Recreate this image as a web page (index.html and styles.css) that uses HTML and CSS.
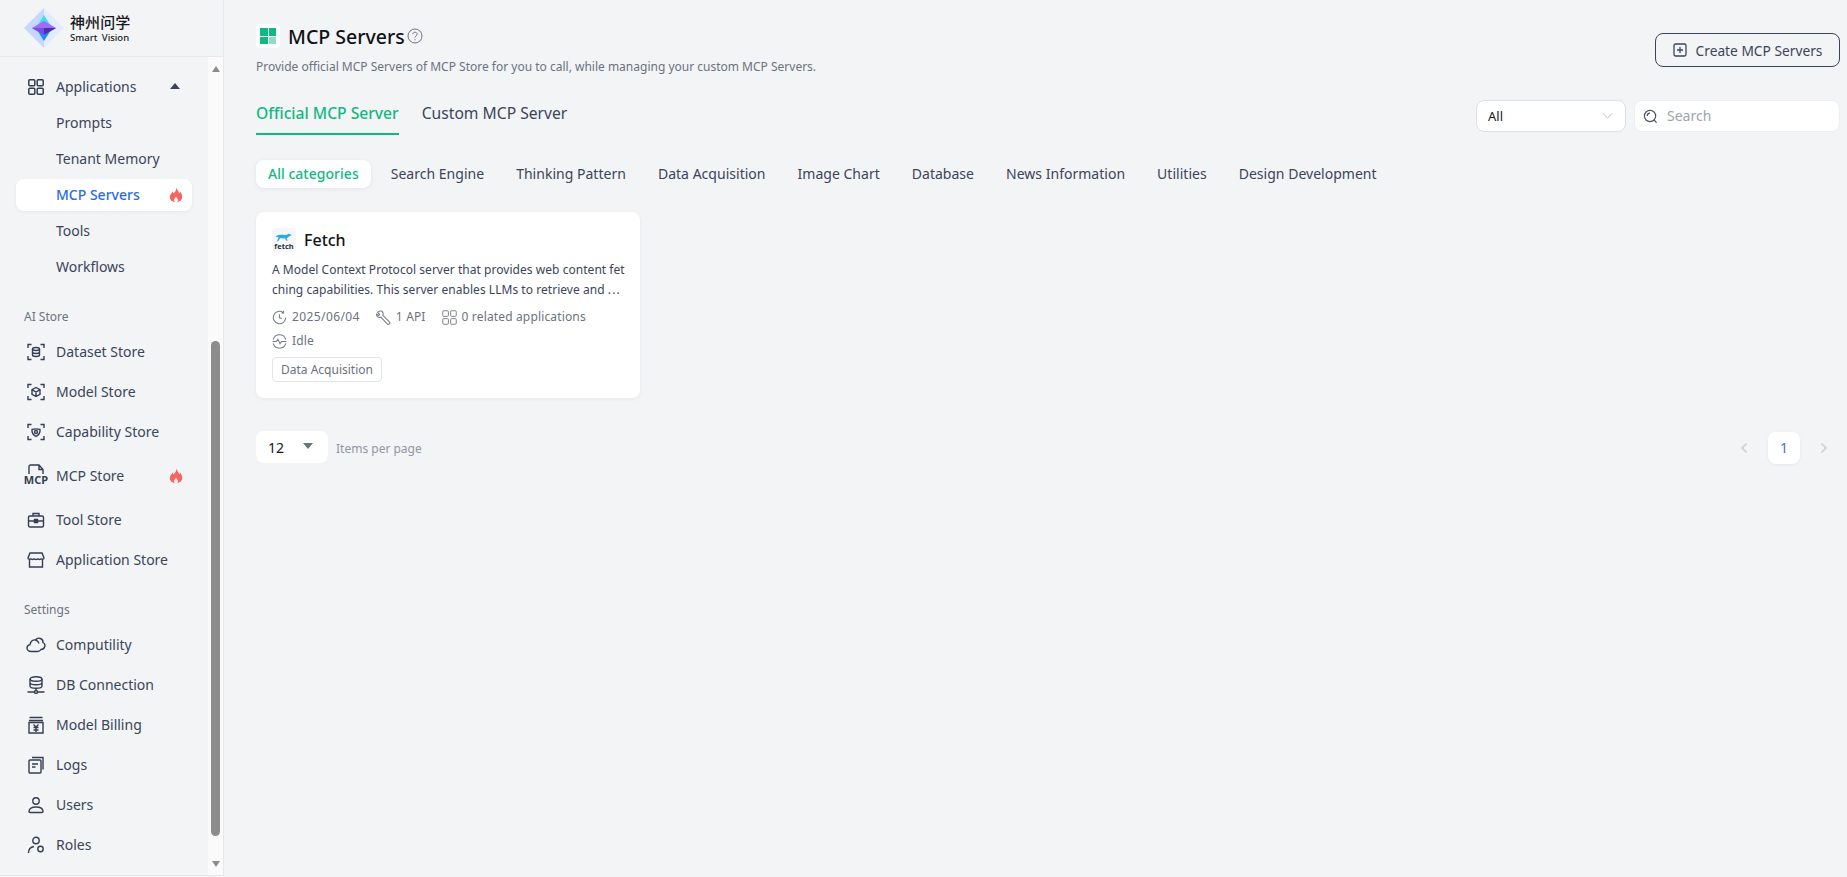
FILE: index.html
```html
<!DOCTYPE html>
<html lang="en">
<head>
    <meta charset="UTF-8">
    <title>MCP Servers</title>
    <link rel="stylesheet" href="styles.css">
</head>
<body>
    <svg class="defs" width="0" height="0">
        <symbol id="flame" viewBox="0 0 16 16">
            <path fill="#f76560" fill-rule="evenodd" d="M8.500 .5C9 3 11 4.500 11.200 6.500 11.800 6 12 5.200 12 4.500 13.500 6 14.200 8 14.200 10 14.200 13 11.500 15.200 8 15.200S1.800 13 1.800 10C1.800 7.500 4 6.500 4.500 4.500 5 5 5.300 5.800 5.300 6.500 7 5.500 8.500 3 8.500 .5zM8 9.500C8.300 11 10 11.800 10 13.200 10 14.300 9 15.200 8 15.200S6 14.300 6 13.200C6 11.800 7.700 11 8 9.500z"/>
        </symbol>
        <symbol id="grid" viewBox="0 0 16 16">
            <rect x=".8" y=".8" width="6" height="6" rx="1"/>
            <rect x="9.200" y=".8" width="6" height="6" rx="1"/>
            <rect x=".8" y="9.200" width="6" height="6" rx="1"/>
            <rect x="9.200" y="9.200" width="6" height="6" rx="1"/>
        </symbol>
        <symbol id="corners" viewBox="0 0 18 18">
            <path d="M1 5V1.500h3.500M13.500 1.500H17V5M17 13v3.500h-3.500M4.500 16.500H1V13"/>
        </symbol>
    </svg>

    <div class="app">
        <aside class="sidebar">
            <div class="brand">
                <svg class="brand-mark" viewBox="0 0 40 40">
                    <path fill="#e2ecff" d="M20 0l20 20-20 20z"/>
                    <path fill="#c3d7ff" d="M20 0v40L0 20z"/>
                    <path fill="#3fdcf8" d="M20 7l7 11H13z"/>
                    <path fill="#1a8ff0" d="M13 22h14l-7 11z"/>
                    <path fill="#a06cf5" d="M20 13l12 7-12 7-12-7z"/>
                    <path fill="#4a2fb0" d="M20 20h12l-12 7z"/>
                    <path fill="#7a4be8" d="M20 20H8l12 7z"/>
                </svg>
                <div class="brand-text">
                    <div class="brand-cn">神州问学</div>
                    <div class="brand-en">Smart Vision</div>
                </div>
            </div>
            <div class="side-body">
                <nav class="nav">
                    <div class="nav-item row-app">
                        <svg class="nav-icon grid-icon"><use href="#grid"/></svg>
                        <span class="nav-label">Applications</span>
                        <span class="caret-up"></span>
                    </div>
                    <div class="nav-item row-app">Prompts</div>
                    <div class="nav-item row-app">Tenant Memory</div>
                    <div class="nav-item row-app active">
                        <span class="nav-label">MCP Servers</span>
                        <svg class="flame"><use href="#flame"/></svg>
                    </div>
                    <div class="nav-item row-app">Tools</div>
                    <div class="nav-item row-app">Workflows</div>

                    <div class="nav-title first">AI Store</div>
                    <div class="nav-item">
                        <svg class="nav-icon" viewBox="0 0 18 18"><use href="#corners"/><ellipse cx="9" cy="6" rx="3.500" ry="1.500"/><path d="M5.500 6v6c0 .8 1.600 1.500 3.500 1.500s3.500-.7 3.500-1.500V6M5.500 9c0 .8 1.600 1.500 3.500 1.500s3.500-.7 3.500-1.500"/></svg>
                        <span class="nav-label">Dataset Store</span>
                    </div>
                    <div class="nav-item">
                        <svg class="nav-icon" viewBox="0 0 18 18"><use href="#corners"/><path d="M9 4.500l4 2.200v4.600l-4 2.200-4-2.200V6.700zM5 6.700l4 2.300 4-2.300M9 9v4.500"/></svg>
                        <span class="nav-label">Model Store</span>
                    </div>
                    <div class="nav-item">
                        <svg class="nav-icon" viewBox="0 0 18 18"><use href="#corners"/><path d="M5 6.500c2.500-.8 5.500-.8 8 0 .3 3-1.200 5.500-4 7-2.800-1.500-4.300-4-4-7z"/><circle cx="9" cy="9" r="1.500"/></svg>
                        <span class="nav-label">Capability Store</span>
                    </div>
                    <div class="nav-item row-mcp">
                        <div class="mcp-icon">
                            <svg viewBox="0 0 20 10"><path d="M3 10V2.500C3 1.600 3.600 1 4.500 1H13l4 4.500V10M13 1v4.500h4"/></svg>
                            <span>MCP</span>
                        </div>
                        <span class="nav-label">MCP Store</span>
                        <svg class="flame"><use href="#flame"/></svg>
                    </div>
                    <div class="nav-item row-tool">
                        <svg class="nav-icon" viewBox="0 0 18 18"><rect x="1.500" y="5" width="15" height="11" rx="1.500"/><path d="M6 5V2.500h6V5M1.500 10h15M7.500 8.500h3v3h-3z"/></svg>
                        <span class="nav-label">Tool Store</span>
                    </div>
                    <div class="nav-item">
                        <svg class="nav-icon" viewBox="0 0 18 18"><path d="M3 2h12l2 5c0 1.500-2.400 1.800-2.700.4-.4 1.400-3 1.400-3.300 0-.3 1.400-3.700 1.400-4 0-.3 1.400-2.900 1.400-3.300 0C3.400 8.800 1 8.500 1 7zM2.500 8.500V16h13V8.500"/></svg>
                        <span class="nav-label">Application Store</span>
                    </div>

                    <div class="nav-title">Settings</div>
                    <div class="nav-item">
                        <svg class="nav-icon cloud" viewBox="0 0 20 18"><path d="M5 15.500c-2.200 0-4-1.500-4-3.500 0-1.800 1.300-3.100 3-3.400C4.600 5 7 3.500 9.500 4c1-1.500 3-2.300 5-1.500 1.800.7 2.600 2.300 2.500 4 1.500.8 2.200 2.400 1.800 4-.5 1.900-2 3-3.800 3-.8 1.300-2 2-3.500 2z"/><path d="M9.500 4c1.800.5 3 1.700 3.500 3.500"/></svg>
                        <span class="nav-label">Computility</span>
                    </div>
                    <div class="nav-item">
                        <svg class="nav-icon" viewBox="0 0 18 18"><ellipse cx="9" cy="3" rx="6" ry="2.300"/><path d="M3 3v7c0 1.300 2.700 2.300 6 2.300s6-1 6-2.300V3M3 6.500c0 1.300 2.700 2.300 6 2.300s6-1 6-2.300M9 12.300V15M0.500 16h6.500M11 16h6.500"/><circle cx="9" cy="16" r="1.500"/></svg>
                        <span class="nav-label">DB Connection</span>
                    </div>
                    <div class="nav-item">
                        <svg class="nav-icon" viewBox="0 0 18 18"><path d="M2.500 1.500h13M2 4.500h14M2 6.500h14V17H2zM6.500 8.500L9 11l2.500-2.500M6.500 11.500h5M6.500 14h5M9 11v5"/></svg>
                        <span class="nav-label">Model Billing</span>
                    </div>
                    <div class="nav-item">
                        <svg class="nav-icon" viewBox="0 0 18 18"><rect x="2" y="4" width="12" height="13" rx="1"/><path d="M5 1.500h11v12M5 8h6M5 11h3.500"/></svg>
                        <span class="nav-label">Logs</span>
                    </div>
                    <div class="nav-item">
                        <svg class="nav-icon" viewBox="0 0 18 18"><circle cx="9" cy="5" r="3.200"/><path d="M2 15.500c0-3 3-4.500 7-4.500s7 1.500 7 4.500c0 .7-.5 1-1 1H3c-.5 0-1-.3-1-1z"/></svg>
                        <span class="nav-label">Users</span>
                    </div>
                    <div class="nav-item">
                        <svg class="nav-icon" viewBox="0 0 18 18"><circle cx="9" cy="4.500" r="3.200"/><path d="M1.500 17c0-3.500 2.200-6 5.500-6.500"/><circle cx="13.500" cy="13" r="2.700"/></svg>
                        <span class="nav-label">Roles</span>
                    </div>
                </nav>
                <div class="scrollbar">
                    <span class="sb-arrow up"></span>
                    <div class="sb-thumb"></div>
                    <span class="sb-arrow down"></span>
                </div>
            </div>
        </aside>

        <main class="main">
            <div class="head">
                <div>
                    <div class="title-row">
                        <div class="title-icon">
                            <i></i><i></i><i></i><i class="pale"></i>
                        </div>
                        <h1 class="title">MCP Servers</h1>
                        <svg class="help" viewBox="0 0 16 16"><circle cx="8" cy="8" r="7"/><path d="M5.800 6.200C5.800 5 6.800 4.200 8 4.200s2.200.8 2.200 2c0 1.600-2.200 1.700-2.200 3.300"/><circle class="dot" cx="8" cy="11.700" r=".6"/></svg>
                    </div>
                    <p class="subtitle">Provide official MCP Servers of MCP Store for you to call, while managing your custom MCP Servers.</p>
                </div>
                <button class="btn-create">
                    <svg viewBox="0 0 14 14"><rect x="1" y="1" width="12" height="12" rx="1.500"/><path d="M7 4v6M4 7h6"/></svg>
                    Create MCP Servers
                </button>
            </div>

            <div class="tabs-row">
                <div class="tabs">
                    <div class="tab active">Official MCP Server</div>
                    <div class="tab">Custom MCP Server</div>
                </div>
                <div class="filters">
                    <div class="select-all">
                        <span>All</span>
                        <svg viewBox="0 0 12 8"><path d="M1 1l5 5.500L11 1"/></svg>
                    </div>
                    <div class="search">
                        <svg viewBox="0 0 16 16"><circle cx="7.500" cy="7.500" r="6"/><path d="M4.500 7.500c0-1.700 1.300-3 3-3M12 12l2.500 2.500"/></svg>
                        <span>Search</span>
                    </div>
                </div>
            </div>

            <div class="cats">
                <div class="cat active">All categories</div>
                <div class="cat">Search Engine</div>
                <div class="cat">Thinking Pattern</div>
                <div class="cat">Data Acquisition</div>
                <div class="cat">Image Chart</div>
                <div class="cat">Database</div>
                <div class="cat">News Information</div>
                <div class="cat">Utilities</div>
                <div class="cat">Design Development</div>
            </div>

            <div class="card">
                <div class="card-head">
                    <div class="fetch-logo">
                        <svg viewBox="0 0 24 12"><path fill="#29abe2" d="M2 5c3-1.500 6-2 10-1.500 2 .2 4-.3 5.500-1.500l2 .6 2 1.200-2.500.6c-1 1.500-2.500 2.500-4 3l1.500 3h-1.500L13 7.500c-2 .3-4 .2-5.500-.2L5 11H3.500l2-4.500C4.500 6.200 3 6 2 5z"/></svg>
                        <span>fetch</span>
                    </div>
                    <div class="card-name">Fetch</div>
                </div>
                <div class="card-desc">A Model Context Protocol server that provides web content fet<br>ching capabilities. This server enables LLMs to retrieve and <span class="dots">...</span></div>
                <div class="meta">
                    <span class="meta-item date">
                        <svg viewBox="0 0 14 14"><path d="M12.800 7A5.800 5.800 0 1 1 10.500 2.400M10.800 .8v2h-2M7 4v3.200l2.200 1"/></svg>
                        2025/06/04
                    </span>
                    <span class="meta-item">
                        <svg viewBox="0 0 14 14"><path d="M5 1c-1.300-.3-2.800.2-3.500 1.200l2 2-1 1-2-1.500C.2 4 .6 5.400 1.500 6.200c.8.700 2 .9 3 .5l6 6.300c.6.500 1.400.5 2 0s.6-1.400 0-2L6.500 5c.4-1.500-.2-3.400-1.500-4z"/></svg>
                        1 API
                    </span>
                    <span class="meta-item">
                        <svg viewBox="0 0 16 16"><use href="#grid"/></svg>
                        0 related applications
                    </span>
                </div>
                <div class="meta">
                    <span class="meta-item">
                        <svg viewBox="0 0 14 14"><path d="M1.200 5.200A6 6 0 0 1 12.800 5.200M12.800 8.800A6 6 0 0 1 1.200 8.800M.5 7H4l1.500-2 2 4L9 7h4.500"/></svg>
                        Idle
                    </span>
                </div>
                <div class="tag">Data Acquisition</div>
            </div>

            <div class="foot">
                <div class="per-page">
                    <div class="size-select">
                        <span>12</span>
                        <i class="caret-down"></i>
                    </div>
                    <span class="per-label">Items per page</span>
                </div>
                <div class="pager">
                    <svg viewBox="0 0 8 12"><path d="M6.500 1.500L2 6l4.500 4.500"/></svg>
                    <div class="page-num">1</div>
                    <svg viewBox="0 0 8 12"><path d="M1.500 1.500L6 6l-4.500 4.500"/></svg>
                </div>
            </div>
        </main>
    </div>
</body>
</html>
```

FILE: styles.css
```css
*{
    box-sizing: border-box;
}
html,body{
    height: 100%;
}
body{
    margin: 0;
    background-color: #f3f4f6;
    color: #3a4559;
    font-family: "Noto Sans", "Noto Sans CJK SC", sans-serif;
    font-size: 14px;
    overflow: hidden;
}
.defs{
    position: absolute;
}
.app{
    display: flex;
    height: 877px;
}

/* sidebar */
.sidebar{
    width: 224px;
    height: 876px;
    flex-shrink: 0;
    border-right: 1px solid #e6e8ec;
    border-bottom: 1px solid #e6e8ec;
    display: flex;
    flex-direction: column;
}
.brand{
    height: 57px;
    flex-shrink: 0;
    border-bottom: 1px solid #e6e8ec;
    display: flex;
    align-items: center;
    padding-left: 24px;
    gap: 6px;
}
.brand-mark{
    width: 40px;
    height: 40px;
}
.brand-text{
    color: #17191f;
}
.brand-cn{
    font-size: 15px;
    line-height: 19px;
    font-weight: 500;
    letter-spacing: .1px;
}
.brand-en{
    font-size: 9.500px;
    line-height: 11px;
    font-weight: 500;
    word-spacing: 2px;
}
.side-body{
    flex: 1;
    display: flex;
    min-height: 0;
}
.nav{
    width: 208px;
    padding-top: 12px;
}
.nav-item{
    height: 40px;
    margin: 0 16px;
    padding-left: 40px;
    display: flex;
    align-items: center;
    position: relative;
    border-radius: 8px;
    line-height: 20px;
}
.nav-item.row-app{
    height: 36px;
}
.nav-item.row-mcp{
    margin-top: 4px;
}
.nav-item.row-tool{
    margin-top: 4px;
}
.nav-item.active{
    background-color: #fff;
    color: #2a6ae9;
    font-weight: 500;
    height: 32px;
    margin-top: 2px;
    margin-bottom: 2px;
    box-shadow: 0 1px 3px rgba(30,40,60,.06);
}
.nav-label{
    flex: 1;
}
.nav-icon{
    position: absolute;
    left: 11px;
    width: 18px;
    height: 18px;
    fill: none;
    stroke: #333e52;
    stroke-width: 1.400;
}
.nav-icon.grid-icon{
    left: 12px;
    width: 16px;
    height: 16px;
    stroke-width: 1.500;
}
.nav-icon.cloud{
    left: 10px;
    width: 20px;
}
.flame{
    width: 16px;
    height: 16px;
    margin-right: 8px;
}
.caret-up{
    width: 0;
    height: 0;
    margin-right: 12px;
    margin-bottom: 3px;
    border-left: 5px solid transparent;
    border-right: 5px solid transparent;
    border-bottom: 6px solid #3a4559;
}
.nav-title{
    margin: 20px 0 3px 24px;
    height: 24px;
    line-height: 24px;
    font-size: 12px;
    color: #6b7280;
}
.nav-title:not(.first){
    margin-top: 18px;
}
.mcp-icon{
    position: absolute;
    left: 8px;
    top: 8px;
    width: 24px;
    display: flex;
    flex-direction: column;
    align-items: center;
}
.mcp-icon svg{
    width: 20px;
    height: 10px;
    fill: none;
    stroke: #333e52;
    stroke-width: 1.400;
}
.mcp-icon span{
    font-size: 11px;
    line-height: 11px;
    font-weight: 700;
    color: #333e52;
}

/* scrollbar */
.scrollbar{
    width: 15px;
    background-color: #fafafa;
    display: flex;
    flex-direction: column;
    align-items: center;
}
.sb-thumb{
    width: 9px;
    height: 495px;
    margin-top: 269px;
    border-radius: 5px;
    background-color: #8c8c8c;
}
.sb-arrow{
    width: 0;
    height: 0;
    border-left: 4.500px solid transparent;
    border-right: 4.500px solid transparent;
}
.sb-arrow.up{
    margin-top: 9px;
    border-bottom: 6px solid #8c8c8c;
}
.sb-arrow.down{
    margin-top: 25px;
    border-top: 6px solid #8c8c8c;
}

/* main */
.main{
    flex: 1;
    min-width: 0;
    padding: 0 7px 0 32px;
}
.head{
    height: 96px;
    display: flex;
    justify-content: space-between;
}
.title-row{
    margin-top: 24px;
    height: 24px;
    display: flex;
    align-items: center;
}
.title-icon{
    width: 24px;
    height: 24px;
    padding: 4px;
    background-color: #fff;
    border-radius: 4px;
    display: grid;
    grid-template-columns: 1fr 1fr;
    gap: 1px;
    margin-right: 8px;
}
.title-icon i{
    background-color: #10b981;
}
.title-icon i.pale{
    background-color: #8fdcc0;
}
.title{
    margin: 1px 0 0;
    font-size: 19.500px;
    line-height: 24px;
    font-weight: 500;
    color: #0f1218;
}
.help{
    width: 16px;
    height: 16px;
    margin-left: 2px;
    fill: none;
    stroke: #6b7280;
}
.help .dot{
    fill: #6b7280;
    stroke: none;
}
.subtitle{
    margin: 10px 0 0;
    font-size: 12px;
    line-height: 18px;
    color: #6b7280;
}
.btn-create{
    margin-top: 33px;
    width: 185px;
    height: 34px;
    padding-left: 6px;
    border: 1px solid #3a4559;
    border-radius: 8px;
    background-color: transparent;
    color: #3a4559;
    font: inherit;
    font-size: 13.750px;
    display: flex;
    align-items: center;
    justify-content: center;
    gap: 9px;
}
.btn-create svg{
    width: 14px;
    height: 14px;
    fill: none;
    stroke: #3a4559;
    stroke-width: 1.300;
}
.tabs-row{
    display: flex;
    justify-content: space-between;
}
.tabs{
    display: flex;
    gap: 23px;
}
.tab{
    height: 39px;
    font-size: 15.650px;
    line-height: 35px;
}
.tab.active{
    color: #10b981;
    font-weight: 500;
    border-bottom: 2px solid #10b981;
}
.filters{
    display: flex;
    gap: 8px;
    margin-top: 4px;
}
.select-all{
    width: 150px;
    height: 32px;
    padding: 0 11px;
    background-color: #fff;
    border: 1px solid #dcdfe4;
    border-radius: 8px;
    display: flex;
    align-items: center;
    justify-content: space-between;
    color: #15181e;
    font-size: 13px;
}
.select-all svg{
    width: 11px;
    height: 8px;
    margin-right: 1px;
    fill: none;
    stroke: #b6bbc4;
}
.search{
    width: 206px;
    height: 32px;
    padding: 0 8px 2px;
    background-color: #fff;
    border: 1px solid #eceef1;
    border-radius: 8px;
    display: flex;
    align-items: center;
    gap: 9px;
    color: #9ca3af;
}
.search svg{
    width: 15px;
    height: 15px;
    margin-top: 2px;
    fill: none;
    stroke: #4b5563;
    stroke-width: 1.300;
}
.cats{
    margin-top: 25px;
    display: flex;
    gap: 8px;
    letter-spacing: .02px;
}
.cat{
    height: 28px;
    padding: 0 12px;
    line-height: 28px;
    border-radius: 8px;
}
.cat.active{
    background-color: #fff;
    color: #10b981;
    font-weight: 500;
    box-shadow: 0 1px 4px rgba(30,40,60,.08);
}

/* card */
.card{
    width: 384px;
    height: 186px;
    margin-top: 24px;
    padding: 16px;
    background-color: #fff;
    border-radius: 8px;
    box-shadow: 0 1px 4px rgba(30,40,60,.06);
}
.card-head{
    display: flex;
    align-items: center;
    gap: 8px;
    height: 24px;
}
.fetch-logo{
    width: 24px;
    height: 24px;
    border-radius: 4px;
    background-color: #f5f6f7;
    display: flex;
    flex-direction: column;
    align-items: center;
    padding-top: 4px;
}
.fetch-logo svg{
    width: 20px;
    height: 10px;
}
.fetch-logo span{
    font-size: 7.500px;
    line-height: 8px;
    font-weight: 700;
    color: #2b3440;
}
.card-name{
    font-size: 16px;
    font-weight: 500;
    color: #0f1218;
}
.card-desc{
    margin-top: 8px;
    font-size: 12px;
    line-height: 20px;
    white-space: nowrap;
    letter-spacing: .04px;
}
.dots{
    letter-spacing: 1.200px;
}
.meta{
    display: flex;
    gap: 16px;
    font-size: 12px;
    line-height: 24px;
    letter-spacing: .15px;
    color: #6b7280;
}
.card-desc + .meta{
    margin-top: 5px;
}
.meta-item{
    display: flex;
    align-items: center;
    gap: 5px;
}
.meta-item.date{
    letter-spacing: .4px;
}
.meta-item svg{
    width: 15px;
    height: 15px;
    fill: none;
    stroke: #757c89;
}
.tag{
    display: inline-block;
    height: 25px;
    margin-top: 4px;
    padding: 0 8px;
    line-height: 23px;
    font-size: 12px;
    color: #6b7280;
    border: 1px solid #e3e5e9;
    border-radius: 4px;
}

/* footer */
.foot{
    margin-top: 32px;
    display: flex;
    justify-content: space-between;
}
.per-page{
    display: flex;
    align-items: center;
    gap: 8px;
}
.size-select{
    width: 72px;
    height: 32px;
    padding: 0 12px;
    background-color: #fff;
    border-radius: 8px;
    display: flex;
    align-items: center;
    justify-content: space-between;
    color: #15181e;
}
.caret-down{
    width: 0;
    height: 0;
    margin-right: 3px;
    margin-bottom: 2px;
    border-left: 5px solid transparent;
    border-right: 5px solid transparent;
    border-top: 6px solid #6b7280;
}
.per-label{
    font-size: 12px;
    color: #9097a3;
    margin-top: 2px;
}
.pager{
    display: flex;
    align-items: center;
    gap: 20px;
    padding: 2px 12px 0 0;
}
.pager svg{
    width: 8px;
    height: 12px;
    fill: none;
    stroke: #d4d6da;
    stroke-width: 2;
}
.page-num{
    width: 32px;
    height: 32px;
    line-height: 32px;
    text-align: center;
    background-color: #fff;
    border-radius: 8px;
    color: #3f6fe0;
    box-shadow: 0 1px 3px rgba(30,40,60,.06);
}
```
